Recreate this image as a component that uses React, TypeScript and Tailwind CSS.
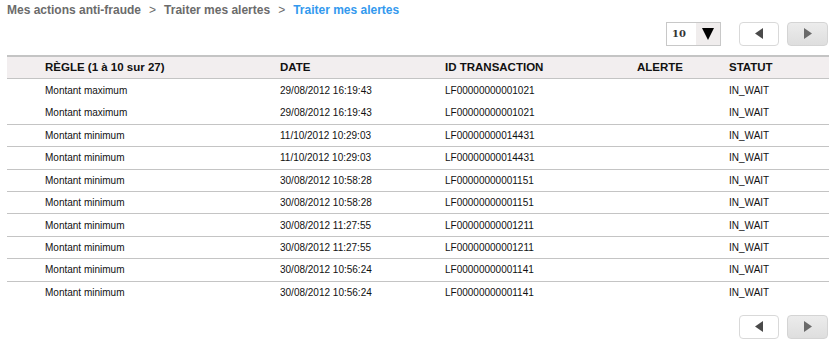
import React from "react";

interface AlertRow {
  rule: string;
  date: string;
  transaction: string;
  alert: string;
  status: string;
}

const rows: AlertRow[] = [
  { rule: "Montant maximum", date: "29/08/2012 16:19:43", transaction: "LF00000000001021", alert: "", status: "IN_WAIT" },
  { rule: "Montant maximum", date: "29/08/2012 16:19:43", transaction: "LF00000000001021", alert: "", status: "IN_WAIT" },
  { rule: "Montant minimum", date: "11/10/2012 10:29:03", transaction: "LF00000000014431", alert: "", status: "IN_WAIT" },
  { rule: "Montant minimum", date: "11/10/2012 10:29:03", transaction: "LF00000000014431", alert: "", status: "IN_WAIT" },
  { rule: "Montant minimum", date: "30/08/2012 10:58:28", transaction: "LF00000000001151", alert: "", status: "IN_WAIT" },
  { rule: "Montant minimum", date: "30/08/2012 10:58:28", transaction: "LF00000000001151", alert: "", status: "IN_WAIT" },
  { rule: "Montant minimum", date: "30/08/2012 11:27:55", transaction: "LF00000000001211", alert: "", status: "IN_WAIT" },
  { rule: "Montant minimum", date: "30/08/2012 11:27:55", transaction: "LF00000000001211", alert: "", status: "IN_WAIT" },
  { rule: "Montant minimum", date: "30/08/2012 10:56:24", transaction: "LF00000000001141", alert: "", status: "IN_WAIT" },
  { rule: "Montant minimum", date: "30/08/2012 10:56:24", transaction: "LF00000000001141", alert: "", status: "IN_WAIT" }
];

const Pager: React.FC = () => {
  return (
    <div className="flex gap-[8px]">
      <button className="w-[40px] h-[24px] rounded-[4px] border border-[#d9d9d9] bg-white flex items-center justify-center">
        <svg width="10" height="11" viewBox="0 0 10 11">
          <polygon points="9,0 9,11 1,5.5" fill="#4a4a4a" />
        </svg>
      </button>
      <button className="w-[41px] h-[24px] rounded-[4px] border border-[#d4d4d4] bg-gradient-to-b from-[#ececec] to-[#dedede] flex items-center justify-center">
        <svg width="10" height="11" viewBox="0 0 10 11">
          <polygon points="1,0 1,11 9,5.5" fill="#6a6a6a" />
        </svg>
      </button>
    </div>
  );
};

const App: React.FC = () => {
  return (
    <div className="w-[840px] h-[343px] bg-white font-['Liberation_Sans',Arial,sans-serif] text-black">
      <div className="pl-[7px] pt-[2px] h-[18px] leading-[16px] text-[12px] font-bold text-[#6b6b6b] flex">
        <span>Mes actions anti-fraude</span>
        <span className="px-[8px] font-normal">&gt;</span>
        <span>Traiter mes alertes</span>
        <span className="px-[8px] font-normal">&gt;</span>
        <span className="text-[#3399ee]">Traiter mes alertes</span>
      </div>

      <div className="flex justify-end items-center pr-[12px] mt-[3px] h-[25px]">
        <div className="w-[55px] h-[24px] border border-[#c8c8c8] flex items-stretch mr-[18px]">
          <span className="flex-1 pl-[5px] flex items-center text-[10px] font-bold text-[#333] font-['DejaVu_Serif',serif]">10</span>
          <span className="w-[24px] bg-[#f0eded] flex items-center justify-center">
            <svg width="12" height="12" viewBox="0 0 12 12">
              <polygon points="0,0 12,0 6,12" fill="#000" />
            </svg>
          </span>
        </div>
        <Pager />
      </div>

      <div className="ml-[7px] mr-[11px] mt-[9px]">
        <div className="flex items-center h-[24px] bg-[#f2eeef] border-t-2 border-b border-[#c4c4c4] text-[11.5px] font-bold text-[#111]">
          <span className="w-[273px] pl-[38px]">RÈGLE (1 à 10 sur 27)</span>
          <span className="w-[165px]">DATE</span>
          <span className="w-[192px]">ID TRANSACTION</span>
          <span className="w-[92px]">ALERTE</span>
          <span>STATUT</span>
        </div>
        {rows.map((r, idx) => (
          <div
            key={idx}
            className={`flex items-center h-[22.4px] text-[10px] text-[#111] ${idx > 1 ? "border-t border-[#c4c4c4]" : ""}`}
          >
            <span className="w-[273px] pl-[38px]">{r.rule}</span>
            <span className="w-[165px]">{r.date}</span>
            <span className="w-[192px]">{r.transaction}</span>
            <span className="w-[92px]">{r.alert}</span>
            <span>{r.status}</span>
          </div>
        ))}
      </div>

      <div className="flex justify-end pr-[12px] mt-[12px]">
        <Pager />
      </div>
    </div>
  );
};

export default App;
